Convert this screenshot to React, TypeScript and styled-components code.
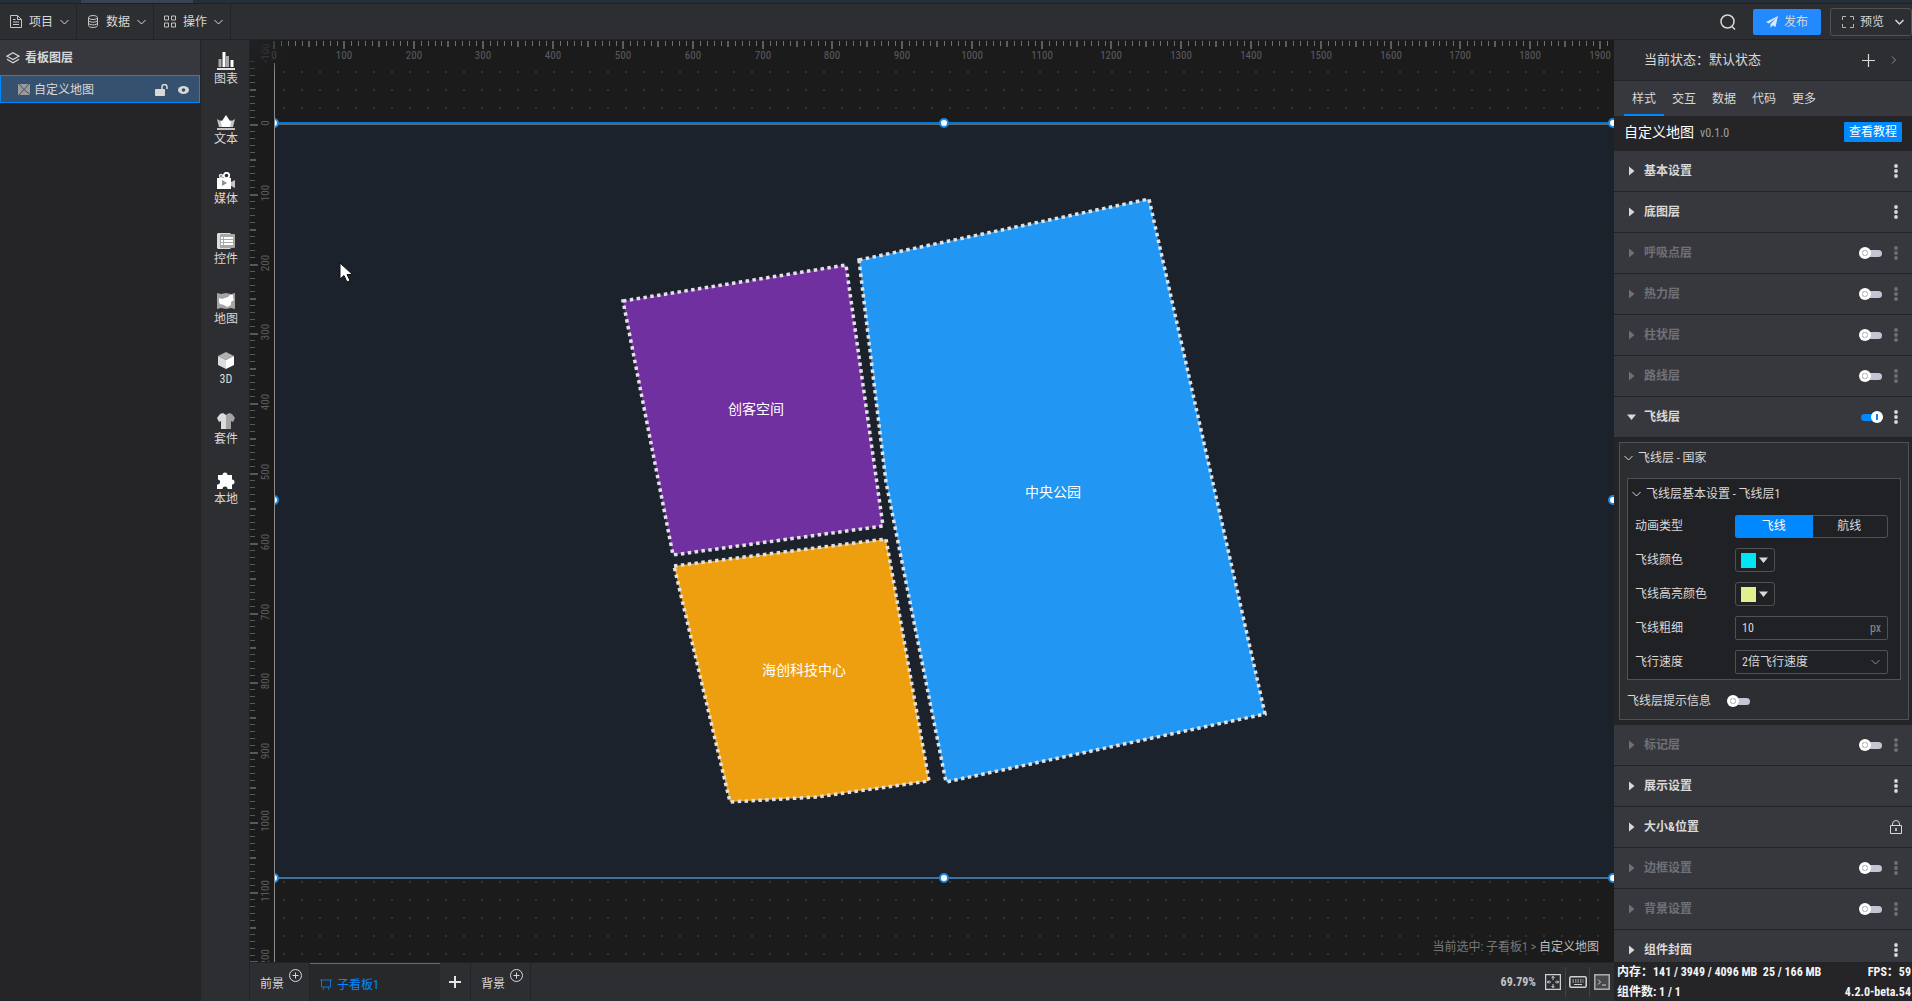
import React, { useState } from "react";
import styled, { createGlobalStyle } from "styled-components";

const color = {
  bar: "#2d2e32",
  panel: "#252527",
  raised: "#37383e",
  line: "#222326",
  text: "#d8d8d8",
  dim: "#707176",
  border: "#505155",
  blue: "#0088ff",
};

const Global = createGlobalStyle`
  *, *::before, *::after { box-sizing: border-box; }
  html, body, #root { height: 100%; }
  body {
    margin: 0;
    overflow: hidden;
    background: ${color.panel};
    color: ${color.text};
    font: 12px/16px "Roboto Condensed", Roboto, "Noto Sans CJK SC", sans-serif;
  }
  button, input, select { font: inherit; color: inherit; margin: 0; padding: 0; border: 0; background: none; }
  button { cursor: pointer; }
  svg { display: block; flex: none; }
`;

const Page = styled.div`
  height: 100vh;
  display: flex;
  flex-direction: column;
`;

const WindowStrip = styled.div`
  height: 4px;
  flex: none;
  background: #262e37;
  border-bottom: 1px solid #1d1f22;
  padding-left: 81px;
`;

const WindowTab = styled.div`
  width: 112px;
  height: 3px;
  background: #3a4252;
`;

const Header = styled.header`
  height: 36px;
  flex: none;
  display: flex;
  align-items: center;
  background: ${color.bar};
  border-bottom: 1px solid ${color.line};
`;

const MenuButton = styled.button`
  width: 77px;
  height: 35px;
  display: flex;
  align-items: center;
  gap: 7px;
  padding-left: 10px;
  border-right: 1px solid ${color.line};
`;

const HeaderActions = styled.div`
  margin-left: auto;
  display: flex;
  align-items: center;
`;

const IconButton = styled.button`
  display: flex;
  align-items: center;
  justify-content: center;
`;

const SearchButton = styled(IconButton)`
  width: 16px;
  margin-right: 17px;
`;

const PublishButton = styled.button`
  width: 68px;
  height: 26px;
  display: flex;
  align-items: center;
  justify-content: center;
  gap: 6px;
  border-radius: 2px;
  background: #2389ff;
  margin-right: 9px;
`;

const PreviewButton = styled.button`
  width: 82px;
  height: 28px;
  display: flex;
  align-items: center;
  gap: 6px;
  padding-left: 11px;
  border: 1px solid ${color.border};
  border-radius: 3px;
  svg:last-child { margin-left: 4px; }
`;

const Body = styled.div`
  flex: 1;
  min-height: 0;
  display: flex;
`;

const Layers = styled.aside`
  width: 201px;
  flex: none;
  background: ${color.panel};
  border-right: 1px solid ${color.line};
`;

const LayersTitle = styled.h2`
  margin: 0;
  height: 35px;
  display: flex;
  align-items: center;
  gap: 5px;
  padding-left: 6px;
  background: ${color.raised};
  font-size: 12px;
  font-weight: 700;
`;

const LayerItem = styled.div`
  height: 28px;
  display: flex;
  align-items: center;
  gap: 4px;
  padding: 1px 10px 0 17px;
  background: #36506f;
  border: 1px solid ${color.blue};
  ${IconButton}:first-of-type { margin-left: auto; margin-right: 6px; }
`;

const Tools = styled.nav`
  width: 49px;
  flex: none;
  display: flex;
  flex-direction: column;
  padding-top: 1px;
  background: ${color.bar};
  border-right: 1px solid ${color.line};
`;

const Tool = styled.button`
  height: 60px;
  display: flex;
  flex-direction: column;
  align-items: center;
  gap: 1px;
  padding: 11px 0 0 2px;
`;

const Center = styled.main`
  flex: 1;
  min-width: 0;
  display: flex;
  flex-direction: column;
`;

const Stage = styled.div`
  flex: 1;
  min-height: 0;
  position: relative;
  overflow: hidden;
  background: #1b1b1b;
`;

const Dots = styled.div`
  position: absolute;
  inset: 23px 0 0 24px;
  border-left: 1px solid #8a8a8a;
  background: conic-gradient(at 2px 2px, transparent 75%, #333 0) 8px 8px / 18px 18px;
`;

const Ruler = styled.svg`
  position: absolute;
  left: 0;
  top: 0;
  width: 100%;
  height: 100%;
  text { fill: #5c5c60; font-size: 11px; }
`;

const Corner = styled.div`
  position: absolute;
  left: 0;
  top: 0;
  width: 50px;
  height: 50px;
  background: radial-gradient(circle at 0 0, #1f2023 12%, transparent 60%);
`;

const Artboard = styled.div`
  position: absolute;
  left: 25px;
  right: 0;
  top: 83px;
  height: 756px;
  background: #1c222c;
  border-bottom: 2px solid #42709a;
  &::before {
    content: "";
    position: absolute;
    left: 0;
    right: 0;
    top: -1px;
    height: 3px;
    background: linear-gradient(#0078d8 2px, #66686c 2px);
  }
`;

const MapArea = styled.svg`
  width: 100%;
  height: 754px;
  text { fill: #fff; font-size: 14px; text-anchor: middle; }
`;

const HandleClip = styled.div`
  position: absolute;
  inset: -6px 0;
  overflow: hidden;
`;

const Handle = styled.i<{ $x: string; $y: string }>`
  position: absolute;
  left: ${(p) => p.$x};
  top: ${(p) => p.$y};
  width: 10px;
  height: 10px;
  margin: -5px 0 0 -6px;
  border: 2px solid #1a88e6;
  border-radius: 50%;
  background: #fff;
`;

const Pointer = styled.svg`
  position: absolute;
  left: 89px;
  top: 222px;
`;

const Breadcrumb = styled.div`
  position: absolute;
  right: 15px;
  bottom: 7px;
  color: #77777a;
  b { font-weight: 400; color: #bdbdbd; }
`;

const Footer = styled.footer`
  height: 39px;
  flex: none;
  display: flex;
  background: ${color.bar};
  border-top: 1px solid ${color.line};
`;

const GroundTab = styled.div`
  width: 60px;
  display: flex;
  padding: 13px 0 0 10px;
  gap: 5px;
  border-right: 1px solid ${color.line};
  svg { margin-top: -7px; }
`;

const BoardTab = styled.button`
  width: 130px;
  display: flex;
  align-items: center;
  gap: 5px;
  padding: 4px 0 0 10px;
  border-top: 1px solid ${color.blue};
  background: #27282a;
  color: ${color.blue};
`;

const AddTab = styled.button`
  width: 31px;
  display: flex;
  align-items: center;
  justify-content: center;
  border-right: 1px solid ${color.line};
`;

const FooterTools = styled.div`
  margin-left: auto;
  display: flex;
  align-items: center;
  padding-right: 1px;
`;

const Zoom = styled.span`
  font-weight: 700;
  margin-right: 5px;
  color: #c4c4c4;
`;

const ToolCell = styled(IconButton)`
  width: 24px;
  height: 30px;
  & + & { border-left: 1px solid #414246; }
`;

const Inspector = styled.aside`
  width: 298px;
  flex: none;
  display: flex;
  flex-direction: column;
  background: ${color.panel};
`;

const StateRow = styled.div`
  height: 41px;
  flex: none;
  display: flex;
  align-items: center;
  justify-content: space-between;
  padding: 0 15px 0 30px;
  background: ${color.bar};
  border-bottom: 1px solid ${color.line};
  font-size: 13px;
`;

const StateTools = styled.div`
  display: flex;
  gap: 16px;
`;

const Tabs = styled.div`
  height: 35px;
  flex: none;
  display: flex;
  padding-left: 10px;
  background: ${color.raised};
`;

const Tab = styled.button<{ $active?: boolean }>`
  width: 40px;
  padding-top: 3px;
  border-bottom: 2px solid ${(p) => (p.$active ? color.blue : "transparent")};
`;

const TitleRow = styled.div`
  height: 35px;
  flex: none;
  display: flex;
  align-items: center;
  padding: 0 10px 3px;
  gap: 6px;
`;

const Title = styled.h1`
  margin: 0;
  font-size: 14px;
  font-weight: 400;
  color: #fff;
`;

const Version = styled.span`
  color: #a0a0a2;
  padding-top: 2px;
`;

const Help = styled.a`
  margin-left: auto;
  width: 58px;
  height: 20px;
  line-height: 20px;
  text-align: center;
  background: ${color.blue};
  color: #fff;
  text-decoration: none;
  border-radius: 1px;
`;

const Sections = styled.div`
  flex: 1;
  min-height: 0;
  overflow: hidden;
`;

const Section = styled.div<{ $off?: boolean }>`
  height: 41px;
  display: flex;
  align-items: center;
  padding: 0 14px 0 13px;
  background: ${color.raised};
  border-bottom: 1px solid ${color.line};
  font-weight: 700;
  color: ${(p) => (p.$off ? color.dim : color.text)};
`;

const SectionName = styled.button`
  display: flex;
  align-items: center;
  font-weight: 700;
  margin-right: auto;
  svg { width: 12px; margin-right: 5px; }
`;

const More = styled(IconButton)`
  width: 4px;
  height: 16px;
  margin-left: 11px;
`;

const LockButton = styled(IconButton)`
  margin-right: -4px;
`;

const Switch = styled.input`
  appearance: none;
  width: 24px;
  height: 12px;
  flex: none;
  position: relative;
  cursor: pointer;
  &::before {
    content: "";
    position: absolute;
    left: 2px;
    right: 1px;
    top: 3px;
    height: 7px;
    border-radius: 4px;
    background: #c4c5d3;
  }
  &::after {
    content: "";
    position: absolute;
    left: 0;
    top: 0;
    width: 12px;
    height: 12px;
    border-radius: 50%;
    background: radial-gradient(circle, #fff 2px, #c8c8c8 2px, #c8c8c8 3px, #fff 3px);
  }
  &:checked::before { background: ${color.blue}; }
  &:checked::after {
    left: 12px;
    background: linear-gradient(${color.blue}, ${color.blue}) center / 2px 6px no-repeat, #fff;
  }
`;

const Group = styled.div`
  padding: 4px 3px 5px 5px;
`;

const OuterBox = styled.div`
  border: 1px solid ${color.border};
  background: ${color.bar};
  padding: 0 7px;
`;

const BoxTitle = styled.button<{ $outer?: boolean }>`
  height: 30px;
  display: flex;
  align-items: center;
  gap: 5px;
  margin-left: ${(p) => (p.$outer ? "-3px" : "4px")};
  margin-bottom: ${(p) => (p.$outer ? "5px" : "0")};
`;

const InnerBox = styled.div`
  border: 1px solid ${color.border};
  background: #202124;
`;

const Field = styled.div`
  height: 34px;
  display: flex;
  align-items: center;
  padding: 0 12px 0 7px;
`;

const Label = styled.label`
  width: 100px;
  flex: none;
`;

const Segment = styled.div`
  flex: 1;
  height: 23px;
  display: flex;
  border: 1px solid ${color.border};
  border-radius: 3px;
`;

const SegmentButton = styled.button<{ $on: boolean }>`
  flex: 1;
  margin: -1px;
  background: ${(p) => (p.$on ? color.blue : "transparent")};
  color: ${(p) => (p.$on ? "#fff" : color.text)};
  border-radius: 3px 0 0 3px;
`;

const ColorButton = styled.button`
  width: 40px;
  height: 24px;
  display: flex;
  align-items: center;
  gap: 3px;
  padding-left: 5px;
  border: 1px solid ${color.border};
  border-radius: 3px;
`;

const Swatch = styled.span<{ $color: string }>`
  width: 15px;
  height: 15px;
  background: ${(p) => p.$color};
`;

const Box = styled.div`
  flex: 1;
  min-width: 0;
  height: 24px;
  display: flex;
  align-items: center;
  padding: 0 6px;
  border: 1px solid ${color.border};
  border-radius: 2px;
  color: #8d8d90;
  input, select {
    flex: 1;
    min-width: 0;
    height: 22px;
    color: ${color.text};
    appearance: none;
    outline: none;
  }
`;

const HintRow = styled.div`
  height: 39px;
  display: flex;
  align-items: center;
  padding-top: 3px;
`;

const Status = styled.div`
  height: 39px;
  flex: none;
  display: flex;
  flex-direction: column;
  justify-content: space-between;
  padding: 1px 0 0 3px;
  background: ${color.panel};
  border-top: 1px solid ${color.line};
  font-weight: 700;
  color: #f4f4f4;
`;

const StatusLine = styled.div`
  display: flex;
  justify-content: space-between;
  padding-right: 1px;
  white-space: pre;
  line-height: 17px;
`;

const Chevron = ({ w = 9, s = 1 }: { w?: number; s?: number }) => (
  <svg width={w} height="8" viewBox="0 0 9 8" fill="none" stroke="currentColor" strokeWidth={s}>
    <path d="M.5 2l4 4 4-4" />
  </svg>
);

const Caret = ({ open }: { open?: boolean }) => (
  <svg width="12" height="10" viewBox="0 0 12 10" fill="currentColor">
    <path d={open ? "M0 2.500h9L4.500 8z" : "M2 .5v9L7.500 5z"} />
  </svg>
);

const PlusCircle = () => (
  <svg width="13" height="13" viewBox="0 0 13 13" fill="none" stroke="#d8d8d8">
    <circle cx="6.500" cy="6.500" r="6" />
    <path d="M3.500 6.500h6M6.500 3.500v6" />
  </svg>
);

const Dots3 = () => (
  <svg width="4" height="14" viewBox="0 0 4 14" fill="currentColor">
    <circle cx="2" cy="2" r="1.900" />
    <circle cx="2" cy="7" r="1.900" />
    <circle cx="2" cy="12" r="1.900" />
  </svg>
);

const menus = [
  {
    name: "项目",
    icon: (
      <svg width="12" height="13" viewBox="0 0 12 13" fill="none" stroke="#c4c4c4">
        <path d="M.5.5h7l4 4v8H.5zM7.500.5v4h4M3 4.500h2.500M3 7h6M3 9.500h6" />
      </svg>
    ),
  },
  {
    name: "数据",
    icon: (
      <svg width="12" height="13" viewBox="0 0 12 13" fill="none" stroke="#c4c4c4">
        <ellipse cx="6" cy="2.500" rx="4.500" ry="2" />
        <path d="M1.500 2.500v8c0 1.100 2 2 4.500 2s4.500-.9 4.500-2v-8M1.500 5.200c0 1.100 2 2 4.500 2s4.500-.9 4.500-2M1.500 7.900c0 1.100 2 2 4.500 2s4.500-.9 4.500-2" />
      </svg>
    ),
  },
  {
    name: "操作",
    icon: (
      <svg width="12" height="13" viewBox="0 0 12 13" fill="none" stroke="#c4c4c4">
        <path d="M.5 1h4v4h-4zM7.500 1h4v4h-4zM.5 8h4v4h-4zM7.500 8h4v4h-4z" />
      </svg>
    ),
  },
];

const tools = [
  {
    name: "图表",
    icon: (
      <>
        <path fill="#a8a8a8" d="M1.500 7h3v8h-3zM9 4h3v11H9z" />
        <path fill="#fff" d="M5.500 0h3v15h-3zM13.500 8h3v7h-3z" />
        <path fill="#e4e4e4" d="M0 16h18v2H0z" />
      </>
    ),
  },
  {
    name: "文本",
    icon: (
      <>
        <path fill="#c4c4c4" d="M0 7l5 3h8l5-3-2 8H2zM0 16h18v2H0z" />
        <path fill="#fff" d="M9 3l4 6 1.500-1-1.500 7H5L3.500 8 5 9z" />
      </>
    ),
  },
  {
    name: "媒体",
    icon: (
      <>
        <circle cx="4" cy="4" r="1.500" fill="none" stroke="#e0e0e0" strokeWidth="1.500" />
        <circle cx="9.500" cy="3.500" r="2.700" fill="none" stroke="#fff" strokeWidth="1.800" />
        <path fill="#fff" d="M0 6h14v11H0z" />
        <path fill="#c4c4c4" d="M14 10l4-2v8l-4-2z" />
        <path fill="#8f8f8f" d="M5 8v6l5-3z" />
      </>
    ),
  },
  {
    name: "控件",
    icon: (
      <>
        <path fill="#dcdcdc" d="M1 1h12l2 2v12l-2 2H1l-1-1V2z" />
        <rect x="3" y="2" width="15" height="14" rx="1" fill="#a8a8a8" />
        <path fill="#fff" d="M4 5h2v2H4zm3 0h9v2H7zM4 8h2v2H4zm3 0h9v2H7zM4 11h2v2H4zm3 0h9v2H7z" />
      </>
    ),
  },
  {
    name: "地图",
    icon: (
      <>
        <path fill="#a4a4a4" d="M0 1l4 1 5-1 5 1 4-1v16l-4-1-5 1-5-1-4 1z" />
        <path fill="#fff" d="M2 6l3 1 3-1 3-1 2-2h3v3l1 2-3 2v3l-4 2-3-2-4-1-1-2z" />
      </>
    ),
  },
  {
    name: "3D",
    icon: (
      <>
        <path fill="#b0b0b0" d="M9 0l8 4-8 4-8-4z" />
        <path fill="#dcdcdc" d="M1 4l8 4v9l-8-4z" />
        <path fill="#fff" d="M17 4L9 8v9l8-4z" />
      </>
    ),
  },
  {
    name: "套件",
    icon: (
      <>
        <path fill="#dcdcdc" d="M6 1l3 2v14H4V9L2 10 0 6l3-4z" />
        <path fill="#a4a4a4" d="M12 1L9 3v14h5V9l2 1 2-4-3-4z" />
      </>
    ),
  },
  {
    name: "本地",
    icon: (
      <path fill="#fff" d="M1 3h4.500a2.500 2.500 0 115 0H15v4.500a2.500 2.500 0 110 5V17h-4.500a2.500 2.500 0 00-5 0H0v-4.500a2.500 2.500 0 001-5z" />
    ),
  },
];

const PX_PER_100 = 69.79;

/* Ticks every 10 units; 50s and 100s are longer and thicker, 100s carry a label. */
const Rulers = () => {
  const ticks = (from: number, to: number) =>
    Array.from({ length: (to - from) / 10 + 1 }, (_, i) => from + i * 10);
  const len = (v: number) => (v % 100 === 0 ? 8 : v % 50 === 0 ? 6 : 5);
  return (
    <Ruler>
      {ticks(0, 1910).map((v) => {
        const x = Math.round(24 + (v * PX_PER_100) / 100);
        return (
          <g key={v}>
            <rect x={x - (v % 50 ? 0 : 1)} y="1" width={v % 50 ? 1 : 2} height={len(v)} fill={v % 50 ? "#707073" : "#5c5c5f"} />
            {v % 100 === 0 && <text x={x} y="19" textAnchor="middle">{v}</text>}
          </g>
        );
      })}
      {ticks(-90, 1200).map((v) => {
        const y = Math.round(84 + (v * PX_PER_100) / 100);
        return <rect key={v} x="0" y={y} width={len(v)} height={v % 50 ? 1 : 2} fill="#58585b" />;
      })}
      {ticks(-100, 1200).filter((v) => v % 100 === 0).map((v) => {
        const y = Math.round(83 + (v * PX_PER_100) / 100);
        return (
          <text key={v} transform={`translate(19 ${y}) rotate(-90)`} textAnchor="middle">{v}</text>
        );
      })}
    </Ruler>
  );
};

const regions = [
  { name: "创客空间", fill: "#7030a0", at: [756, 414], points: "623,301 846,265 883,526 673,555" },
  { name: "中央公园", fill: "#2196f3", at: [1053, 497], points: "859,260 1149,199 1265,714 946,782 886,482" },
  { name: "海创科技中心", fill: "#ee9f10", at: [804, 675], points: "674,566 886,539 929,781 816,797 730,802" },
];

const handles = [
  ["0px", "6px"], ["50%", "6px"], ["100%", "6px"],
  ["0px", "50%"], ["100%", "50%"],
  ["0px", "calc(100% - 5px)"], ["50%", "calc(100% - 5px)"], ["100%", "calc(100% - 5px)"],
];

type Row = { name: string; toggle?: boolean; lock?: boolean };

const topRows: Row[] = [
  { name: "基本设置" },
  { name: "底图层" },
  { name: "呼吸点层", toggle: true },
  { name: "热力层", toggle: true },
  { name: "柱状层", toggle: true },
  { name: "路线层", toggle: true },
];

const bottomRows: Row[] = [
  { name: "标记层", toggle: true },
  { name: "展示设置" },
  { name: "大小&位置", lock: true },
  { name: "边框设置", toggle: true },
  { name: "背景设置", toggle: true },
  { name: "组件封面" },
];

const SectionRow = ({ name, toggle, lock }: Row) => {
  const [on, setOn] = useState(false);
  return (
    <Section $off={toggle && !on}>
      <SectionName><Caret />{name}</SectionName>
      {toggle && <Switch type="checkbox" aria-label={name} checked={on} onChange={() => setOn(!on)} />}
      {lock ? (
        <LockButton aria-label="锁定">
          <svg width="12" height="14" viewBox="0 0 12 14" fill="none" stroke="currentColor">
            <path d="M.5 5.500h11v8H.5zM2.500 5.500V4a3.500 3.500 0 017 0v1.500" />
            <path d="M6 8v3" strokeWidth="1.500" />
          </svg>
        </LockButton>
      ) : (
        <More aria-label="更多"><Dots3 /></More>
      )}
    </Section>
  );
};

const tabs = ["样式", "交互", "数据", "代码", "更多"];

export default function App() {
  const [tab, setTab] = useState("样式");
  const [kind, setKind] = useState("飞线");
  const [fly, setFly] = useState(true);
  const [hint, setHint] = useState(false);
  return (
    <Page>
      <Global />
      <WindowStrip><WindowTab /></WindowStrip>
      <Header>
        {menus.map((m) => (
          <MenuButton key={m.name}>{m.icon}{m.name}<Chevron /></MenuButton>
        ))}
        <HeaderActions>
          <SearchButton aria-label="搜索">
            <svg width="16" height="16" viewBox="0 0 16 16" fill="none" stroke="#d8d8d8" strokeWidth="1.500">
              <circle cx="7.500" cy="7.500" r="6.500" />
              <path d="M12 12.500l3 3" />
            </svg>
          </SearchButton>
          <PublishButton>
            <svg width="12" height="12" viewBox="0 0 12 12" fill="#d6e8ff">
              <path d="M12 0L0 6l3 1.500L10 2 4.500 8.300V12l2-2.600L9.500 11z" />
            </svg>
            发布
          </PublishButton>
          <PreviewButton>
            <svg width="12" height="12" viewBox="0 0 12 12" fill="none" stroke="#b4b4b4">
              <path d="M4 .5H.5V4M8 .5h3.500V4M.5 8v3.500H4M11.500 8v3.500H8" />
            </svg>
            预览
            <Chevron w={11} s={1.5} />
          </PreviewButton>
        </HeaderActions>
      </Header>
      <Body>
        <Layers>
          <LayersTitle>
            <svg width="14" height="12" viewBox="0 0 14 12" fill="none" stroke="currentColor" strokeWidth="1.200">
              <path d="M7 .8l6 3.400-6 3.400-6-3.400zM1 7.200l6 3.600 6-3.600" />
            </svg>
            看板图层
          </LayersTitle>
          <LayerItem>
            <svg width="12" height="11" viewBox="0 0 12 11">
              <path fill="#9a9a9a" d="M0 0h12v11H0z" />
              <path d="M1 0l5 5.500L11 0M6 5.500L1 11M6 5.500l6 5" stroke="#42526a" fill="none" />
            </svg>
            自定义地图
            <IconButton aria-label="锁定">
              <svg width="13" height="12" viewBox="0 0 13 12" fill="none" stroke="#d8d8d8">
                <path fill="#d8d8d8" d="M.5 5.500h9v6h-9z" />
                <path d="M7 5.500V3a2.500 2.500 0 015 0v2" strokeWidth="1.500" />
              </svg>
            </IconButton>
            <IconButton aria-label="显示">
              <svg width="11" height="8" viewBox="0 0 11 8">
                <ellipse cx="5.500" cy="4" rx="5.500" ry="4" fill="#d8d8d8" />
                <circle cx="5.500" cy="4" r="1.800" fill="#36506f" />
              </svg>
            </IconButton>
          </LayerItem>
        </Layers>
        <Tools>
          {tools.map((t) => (
            <Tool key={t.name}>
              <svg width="18" height="18" viewBox="0 0 18 18">{t.icon}</svg>
              {t.name}
            </Tool>
          ))}
        </Tools>
        <Center>
          <Stage>
            <Dots />
            <Rulers />
            <Corner />
            <Artboard>
              <MapArea viewBox="275 123 1339 754">
                {regions.map((r) => (
                  <g key={r.name}>
                    <polygon points={r.points} fill={r.fill} stroke="#e2e2e2" strokeWidth="3.500" strokeDasharray="3.500 3.400" />
                    <text x={r.at[0]} y={r.at[1]}>{r.name}</text>
                  </g>
                ))}
              </MapArea>
              <HandleClip>
                {handles.map(([x, y]) => <Handle key={x + y} $x={x} $y={y} />)}
              </HandleClip>
            </Artboard>
            <Pointer width="16" height="22" viewBox="0 0 16 22">
              <path d="M1 1v16l4-3.500 3 6.500 3-1.500-3-6h5.500z" fill="#fff" stroke="#111" />
            </Pointer>
            <Breadcrumb>当前选中: 子看板1 &gt; <b>自定义地图</b></Breadcrumb>
          </Stage>
          <Footer>
            <GroundTab>前景<PlusCircle /></GroundTab>
            <BoardTab>
              <svg width="12" height="11" viewBox="0 0 12 11" fill="none" stroke="#1474c8">
                <path d="M0 1h12M1.500 1v7h9V1M4 8l-1 3M8 8l1 3" />
              </svg>
              子看板1
            </BoardTab>
            <AddTab aria-label="新增">
              <svg width="12" height="12" viewBox="0 0 12 12" stroke="#e4e4e4" strokeWidth="2">
                <path d="M0 6h12M6 0v12" />
              </svg>
            </AddTab>
            <GroundTab>背景<PlusCircle /></GroundTab>
            <FooterTools>
              <Zoom>69.79%</Zoom>
              <ToolCell aria-label="适应画布">
                <svg width="16" height="16" viewBox="0 0 16 16" fill="none" stroke="#d0d0d0">
                  <rect x=".5" y=".5" width="15" height="15" strokeWidth="1.500" />
                  <path d="M8 2v4M8 10v4M2 8h4M10 8h4M6.500 4L8 2.500 9.500 4M6.500 12L8 13.500 9.500 12M4 6.500L2.500 8 4 9.500M12 6.500L13.500 8 12 9.500" />
                </svg>
              </ToolCell>
              <ToolCell aria-label="快捷键">
                <svg width="18" height="12" viewBox="0 0 18 12" fill="none" stroke="#d0d0d0">
                  <rect x=".8" y=".8" width="16.400" height="10.400" rx="1.500" strokeWidth="1.600" />
                  <path d="M3.500 4h11M3.500 6h11" strokeDasharray="1.500 1" />
                  <path d="M5 8.500h8" />
                </svg>
              </ToolCell>
              <ToolCell aria-label="控制台">
                <svg width="16" height="16" viewBox="0 0 16 16" fill="none" stroke="#d0d0d0">
                  <rect x=".8" y=".8" width="14.400" height="14.400" fill="#48494c" stroke="#b0b0b2" strokeWidth="1.500" />
                  <path d="M4 5.500L6.500 8 4 10.500M8 11h4" />
                </svg>
              </ToolCell>
            </FooterTools>
          </Footer>
        </Center>
        <Inspector>
          <StateRow>
            <span>当前状态：默认状态</span>
            <StateTools>
              <IconButton aria-label="新增状态">
                <svg width="13" height="13" viewBox="0 0 13 13" stroke="#d8d8d8" strokeWidth="1.200">
                  <path d="M0 6.500h13M6.500 0v13" />
                </svg>
              </IconButton>
              <IconButton aria-label="展开">
                <svg width="6" height="8" viewBox="0 0 6 8" fill="none" stroke="#8c8c8e">
                  <path d="M1 .5L4.500 4 1 7.500" />
                </svg>
              </IconButton>
            </StateTools>
          </StateRow>
          <Tabs>
            {tabs.map((t) => (
              <Tab key={t} $active={t === tab} onClick={() => setTab(t)}>{t}</Tab>
            ))}
          </Tabs>
          <TitleRow>
            <Title>自定义地图</Title>
            <Version>v0.1.0</Version>
            <Help href="#help">查看教程</Help>
          </TitleRow>
          <Sections>
            {topRows.map((r) => <SectionRow key={r.name} {...r} />)}
            <Section>
              <SectionName><Caret open />飞线层</SectionName>
              <Switch type="checkbox" aria-label="飞线层" checked={fly} onChange={() => setFly(!fly)} />
              <More aria-label="更多"><Dots3 /></More>
            </Section>
            <Group>
              <OuterBox>
                <BoxTitle $outer><Chevron />飞线层 - 国家</BoxTitle>
                <InnerBox>
                  <BoxTitle><Chevron />飞线层基本设置 - 飞线层1</BoxTitle>
                  <Field>
                    <Label as="span">动画类型</Label>
                    <Segment>
                      {["飞线", "航线"].map((k) => (
                        <SegmentButton key={k} $on={k === kind} onClick={() => setKind(k)}>{k}</SegmentButton>
                      ))}
                    </Segment>
                  </Field>
                  <Field>
                    <Label htmlFor="line-color">飞线颜色</Label>
                    <ColorButton id="line-color"><Swatch $color="#00e5f2" /><Caret open /></ColorButton>
                  </Field>
                  <Field>
                    <Label htmlFor="light-color">飞线高亮颜色</Label>
                    <ColorButton id="light-color"><Swatch $color="#e0f08c" /><Caret open /></ColorButton>
                  </Field>
                  <Field>
                    <Label htmlFor="line-width">飞线粗细</Label>
                    <Box><input id="line-width" defaultValue="10" />px</Box>
                  </Field>
                  <Field>
                    <Label htmlFor="speed">飞行速度</Label>
                    <Box>
                      <select id="speed"><option>2倍飞行速度</option></select>
                      <Chevron w={11} />
                    </Box>
                  </Field>
                </InnerBox>
                <HintRow>
                  <Label htmlFor="hint">飞线层提示信息</Label>
                  <Switch id="hint" type="checkbox" checked={hint} onChange={() => setHint(!hint)} />
                </HintRow>
              </OuterBox>
            </Group>
            {bottomRows.map((r) => <SectionRow key={r.name} {...r} />)}
          </Sections>
          <Status>
            <StatusLine>
              <span>内存：141 / 3949 / 4096 MB  25 / 166 MB</span>
              <span>FPS：59</span>
            </StatusLine>
            <StatusLine>
              <span>组件数: 1 / 1</span>
              <span>4.2.0-beta.54</span>
            </StatusLine>
          </Status>
        </Inspector>
      </Body>
    </Page>
  );
}
